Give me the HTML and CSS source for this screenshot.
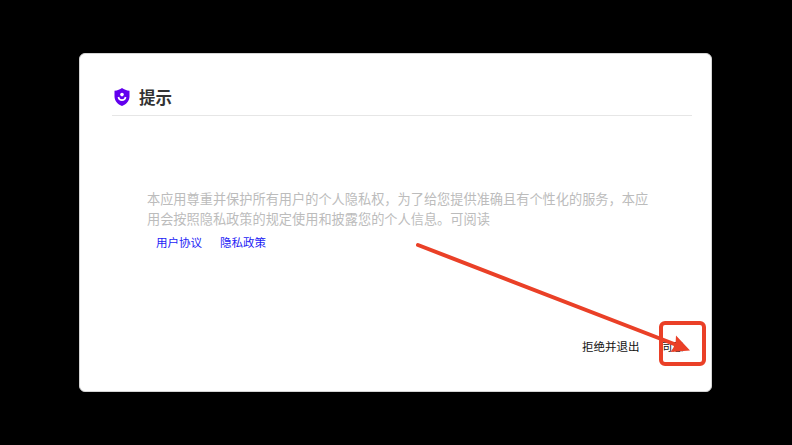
FILE: index.html
```html
<!DOCTYPE html>
<html lang="zh-CN">
<head>
<meta charset="utf-8">
<title>提示</title>
<link rel="stylesheet" href="styles.css">
</head>
<body>
<main class="dialog">
  <header class="head">
    <svg class="shield" viewBox="0 0 16 18"><path fill="#6200ee" d="M8 0c2 1.500 4.500 2.500 7.500 2.800v5.700c0 4.200-3.200 7.900-7.500 9.500-4.300-1.600-7.500-5.300-7.500-9.500V2.800C3.500 2.500 6 1.500 8 0z"/><circle cx="8" cy="6.600" r="1.800" fill="#fff"/><path d="M4.400 9c.8 4.200 6.400 4.200 7.200 0" fill="none" stroke="#fff" stroke-width="1.600"/></svg>
    <h1>提示</h1>
  </header>
  <section class="content">
    <p>本应用尊重并保护所有用户的个人隐私权，为了给您提供准确且有个性化的服务，本应<br>用会按照隐私政策的规定使用和披露您的个人信息。可阅读</p>
    <nav class="links"><a>用户协议</a><a>隐私政策</a></nav>
  </section>
  <footer class="actions"><span>拒绝并退出</span><span>同意</span></footer>
</main>
<svg class="annotation" viewBox="0 0 792 445" fill="none" stroke="#ea4027" stroke-width="4"><rect x="661" y="323" width="43" height="41" rx="4"/><path d="M418 245L678 345.500" stroke-linecap="round"/><path d="M690 350.500L676 335.500 675.500 344.500 670.500 352z" fill="#ea4027" stroke="none"/></svg>
</body>
</html>
```
FILE: styles.css
```css
* { box-sizing: border-box; }
body { margin: 0; height: 445px; background: #000; padding: 53px 80px 0 79px; overflow: hidden; font-family: "Noto Sans CJK SC", sans-serif; }
.dialog { height: 339px; background: #fff; border: 1px solid #d4d4d4; border-radius: 6px; padding: 25px 19px 0 32px; display: flex; flex-direction: column; }
.head { height: 37px; border-bottom: 1px solid #e6e6e6; display: flex; align-items: center; gap: 9px; padding-left: 2px; }
.shield { width: 16px; height: 18px; }
h1 { margin: 0; padding-bottom: 1px; font-size: 16.5px; line-height: 24px; font-weight: 700; color: #333; }
.content { margin: 73px 0 0 35px; }
p { margin: 0; color: #bcbcbc; font-size: 13.2px; line-height: 20px; white-space: nowrap; }
.links { display: flex; gap: 18px; padding: 3px 0 0 9px; font-size: 11.5px; line-height: 20px; color: #241cf5; }
.actions { margin-top: 84px; padding-left: 470px; display: flex; gap: 21px; color: #111; font-size: 11.5px; line-height: 20px; white-space: nowrap; }
.annotation { position: absolute; left: 0; top: 0; width: 792px; height: 445px; }
```
